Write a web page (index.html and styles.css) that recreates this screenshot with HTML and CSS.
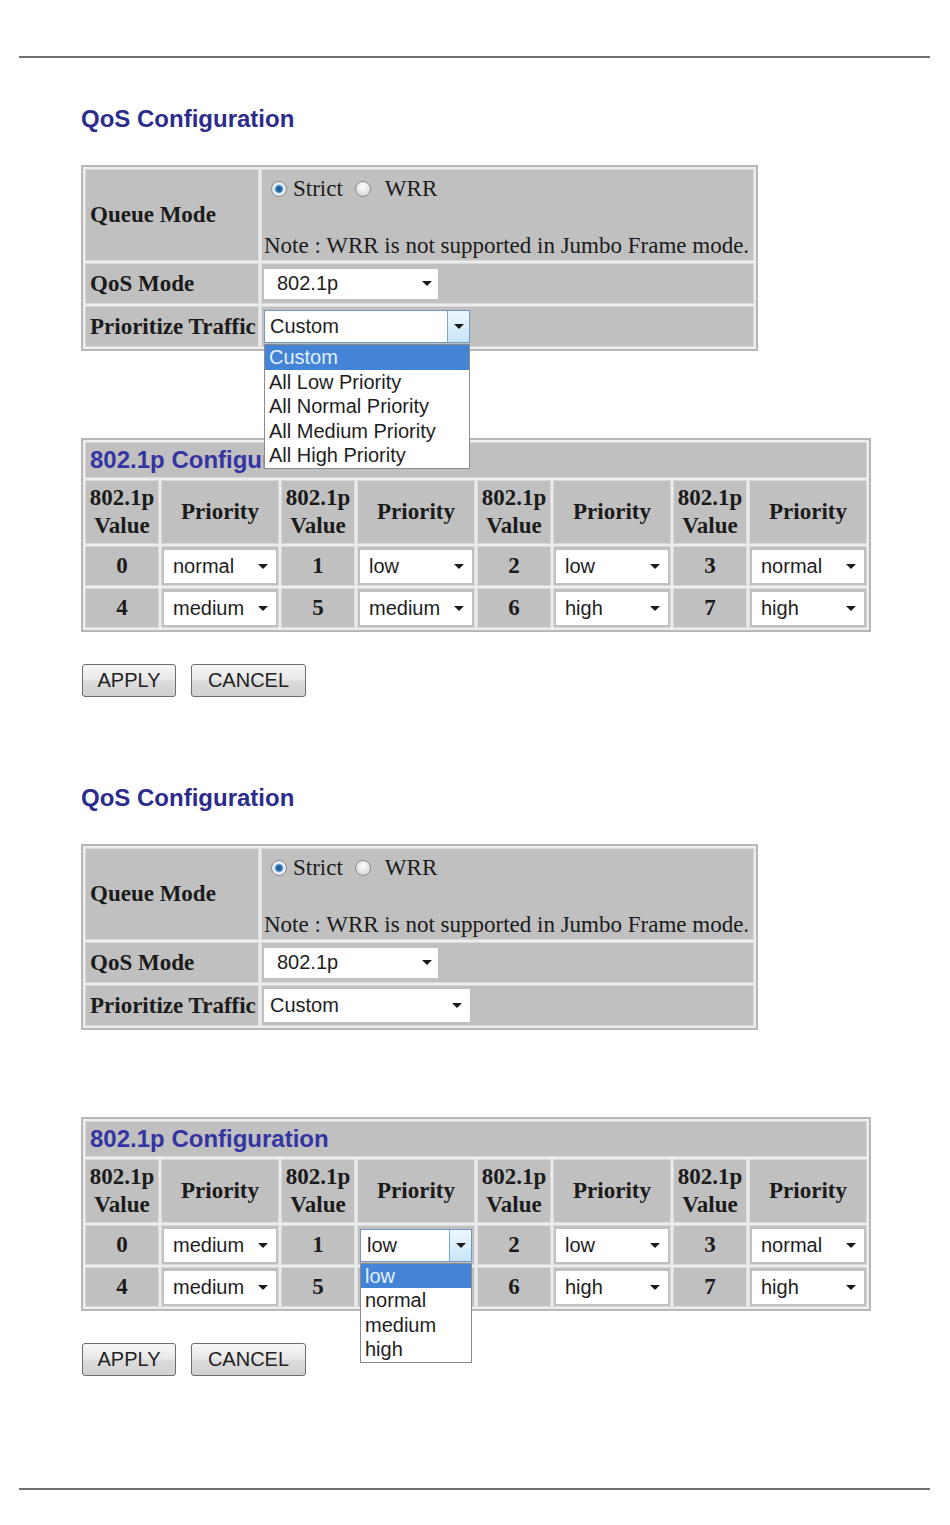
FILE: index.html
```html
<!DOCTYPE html>
<html lang="en">
<head>
    <meta charset="UTF-8">
    <meta name="viewport" content="width=device-width, initial-scale=1.0">
    <title>QoS Configuration</title>
    <link rel="stylesheet" href="styles.css">
</head>
<body>

    <hr class="rule">

    <div class="page">

        <!-- Prioritize Traffic list open -->
        <section class="section">
            <h1 class="title">QoS Configuration</h1>

            <table class="grid mode-table">
                <tr>
                    <td class="label label-mode">Queue Mode</td>
                    <td class="value value-mode">
                        <div class="radio-line">
                            <span class="radio on"></span><span class="radio-label">Strict</span>
                            <span class="radio"></span><span class="radio-label radio-label-wide">WRR</span>
                        </div>
                        <div class="note">Note : WRR is not supported in Jumbo Frame mode.</div>
                    </td>
                </tr>
                <tr>
                    <td class="label">QoS Mode</td>
                    <td class="value">
                        <div class="select qos-select"><span>802.1p</span><span class="caret"></span></div>
                    </td>
                </tr>
                <tr>
                    <td class="label">Prioritize Traffic</td>
                    <td class="value">
                        <div class="select traffic-select open">
                            <span>Custom</span>
                            <span class="select-btn"><span class="caret"></span></span>
                            <ul class="options">
                                <li class="picked">Custom</li>
                                <li>All Low Priority</li>
                                <li>All Normal Priority</li>
                                <li>All Medium Priority</li>
                                <li>All High Priority</li>
                            </ul>
                        </div>
                    </td>
                </tr>
            </table>

            <table class="grid prio-table">
                <tr>
                    <td class="grid-head" colspan="8">802.1p Configuration</td>
                </tr>
                <tr class="col-heads">
                    <td class="num-col">802.1p<br>Value</td><td class="prio-col">Priority</td>
                    <td class="num-col">802.1p<br>Value</td><td class="prio-col">Priority</td>
                    <td class="num-col">802.1p<br>Value</td><td class="prio-col">Priority</td>
                    <td class="num-col">802.1p<br>Value</td><td class="prio-col">Priority</td>
                </tr>
                <tr class="data-row">
                    <td class="num">0</td><td class="sel"><div class="select prio-select"><span>normal</span><span class="caret"></span></div></td>
                    <td class="num">1</td><td class="sel"><div class="select prio-select"><span>low</span><span class="caret"></span></div></td>
                    <td class="num">2</td><td class="sel"><div class="select prio-select"><span>low</span><span class="caret"></span></div></td>
                    <td class="num">3</td><td class="sel"><div class="select prio-select"><span>normal</span><span class="caret"></span></div></td>
                </tr>
                <tr class="data-row">
                    <td class="num">4</td><td class="sel"><div class="select prio-select"><span>medium</span><span class="caret"></span></div></td>
                    <td class="num">5</td><td class="sel"><div class="select prio-select"><span>medium</span><span class="caret"></span></div></td>
                    <td class="num">6</td><td class="sel"><div class="select prio-select"><span>high</span><span class="caret"></span></div></td>
                    <td class="num">7</td><td class="sel"><div class="select prio-select"><span>high</span><span class="caret"></span></div></td>
                </tr>
            </table>

            <div class="actions">
                <button class="btn btn-apply">APPLY</button>
                <button class="btn btn-cancel">CANCEL</button>
            </div>
        </section>

        <!-- priority list open on value 1 -->
        <section class="section">
            <h1 class="title">QoS Configuration</h1>

            <table class="grid mode-table">
                <tr>
                    <td class="label label-mode">Queue Mode</td>
                    <td class="value value-mode">
                        <div class="radio-line">
                            <span class="radio on"></span><span class="radio-label">Strict</span>
                            <span class="radio"></span><span class="radio-label radio-label-wide">WRR</span>
                        </div>
                        <div class="note">Note : WRR is not supported in Jumbo Frame mode.</div>
                    </td>
                </tr>
                <tr>
                    <td class="label">QoS Mode</td>
                    <td class="value">
                        <div class="select qos-select"><span>802.1p</span><span class="caret"></span></div>
                    </td>
                </tr>
                <tr>
                    <td class="label">Prioritize Traffic</td>
                    <td class="value">
                        <div class="select traffic-select"><span>Custom</span><span class="caret"></span></div>
                    </td>
                </tr>
            </table>

            <table class="grid prio-table">
                <tr>
                    <td class="grid-head" colspan="8">802.1p Configuration</td>
                </tr>
                <tr class="col-heads">
                    <td class="num-col">802.1p<br>Value</td><td class="prio-col">Priority</td>
                    <td class="num-col">802.1p<br>Value</td><td class="prio-col">Priority</td>
                    <td class="num-col">802.1p<br>Value</td><td class="prio-col">Priority</td>
                    <td class="num-col">802.1p<br>Value</td><td class="prio-col">Priority</td>
                </tr>
                <tr class="data-row">
                    <td class="num">0</td><td class="sel"><div class="select prio-select"><span>medium</span><span class="caret"></span></div></td>
                    <td class="num">1</td>
                    <td class="sel">
                        <div class="select prio-select open">
                            <span>low</span>
                            <span class="select-btn"><span class="caret"></span></span>
                            <ul class="options">
                                <li class="picked">low</li>
                                <li>normal</li>
                                <li>medium</li>
                                <li>high</li>
                            </ul>
                        </div>
                    </td>
                    <td class="num">2</td><td class="sel"><div class="select prio-select"><span>low</span><span class="caret"></span></div></td>
                    <td class="num">3</td><td class="sel"><div class="select prio-select"><span>normal</span><span class="caret"></span></div></td>
                </tr>
                <tr class="data-row">
                    <td class="num">4</td><td class="sel"><div class="select prio-select"><span>medium</span><span class="caret"></span></div></td>
                    <td class="num">5</td><td class="sel"><div class="select prio-select"><span>medium</span><span class="caret"></span></div></td>
                    <td class="num">6</td><td class="sel"><div class="select prio-select"><span>high</span><span class="caret"></span></div></td>
                    <td class="num">7</td><td class="sel"><div class="select prio-select"><span>high</span><span class="caret"></span></div></td>
                </tr>
            </table>

            <div class="actions">
                <button class="btn btn-apply">APPLY</button>
                <button class="btn btn-cancel">CANCEL</button>
            </div>
        </section>

    </div>

    <hr class="rule rule-bottom">

</body>
</html>
```

FILE: styles.css
```css
body {
    margin: 0;
    background-color: #fff;
    font-family: "Liberation Serif", "Times New Roman", serif;
    color: #1b1b1b;
}
.rule {
    height: 2px;
    border: 0;
    background-color: #6f6f6f;
    margin: 56px 20px 0 19px;
}
.rule-bottom {
    margin-top: 112px;
}
.page {
    padding-left: 81px;
}
.section {
    margin-top: 87px;
}
.section:first-child {
    margin-top: 47px;
}
.title {
    margin: 0 0 32px;
    font: bold 24px/28px "Liberation Sans", Arial, sans-serif;
    color: #2c2c8c;
}

/* gray web-admin tables */
.grid {
    border-collapse: separate;
    border-spacing: 2px;
    border: 2px solid #b7b7b7;
    background-color: #ededed;
}
.grid td {
    box-sizing: border-box;
    background-color: #c0c0c0;
    border: 1px solid #d9d9d9;
    padding: 0;
}
.mode-table {
    margin-bottom: 87px;
}
.mode-table td {
    height: 41px;
}
.mode-table .label {
    width: 174px;
    padding-left: 4px;
    font-size: 23px;
    font-weight: bold;
    white-space: nowrap;
}
.mode-table .value {
    width: 493px;
    padding: 0 2px;
}
.mode-table .label-mode,
.mode-table .value-mode {
    height: 92px;
}
.value-mode {
    vertical-align: top;
}

/* radios */
.radio-line {
    display: flex;
    align-items: center;
    height: 30px;
    margin-top: 4px;
    font-size: 23px;
}
.radio {
    box-sizing: border-box;
    width: 16px;
    height: 16px;
    margin-left: 7px;
    border-radius: 50%;
    border: 1px solid #8d8d8d;
    background: radial-gradient(circle at 50% 35%, #ffffff, #dcdcdc 70%, #c9c9c9);
}
.radio.on {
    background: radial-gradient(circle, #1d4f7e 0, #2f74b3 3px, #8fc0e6 4px, #eef6fc 5px, #dcdcdc 8px);
}
.radio-label {
    margin-left: 6px;
}
.radio-label + .radio {
    margin-left: 12px;
}
.radio-label-wide {
    margin-left: 14px;
}
.note {
    margin-top: 28px;
    font-size: 23px;
    line-height: 28px;
    white-space: nowrap;
}

/* drop-down boxes */
.select {
    position: relative;
    display: flex;
    align-items: center;
    box-sizing: border-box;
    background-color: #fff;
    font: 20px "Liberation Sans", Arial, sans-serif;
    color: #1e1e1e;
}
.caret {
    margin-left: auto;
    width: 0;
    height: 0;
    border-left: 5px solid transparent;
    border-right: 5px solid transparent;
    border-top: 5px solid #1a1a1a;
}
.select-btn {
    margin-left: auto;
    width: 22px;
    height: 100%;
    box-sizing: border-box;
    border-left: 1px solid #79a8d6;
    background: linear-gradient(#eef7fd, #c6e5f8);
    display: flex;
    align-items: center;
    justify-content: center;
}
.select-btn .caret {
    margin: 0;
}
.select.open {
    border: 1px solid #6f98c6;
    padding-right: 0;
}
.options {
    position: absolute;
    top: 100%;
    left: -1px;
    right: -1px;
    z-index: 5;
    margin: 2px 0 0;
    padding: 0;
    list-style: none;
    background-color: #fff;
    border: 1px solid #8c8c8c;
    line-height: 24.5px;
}
.options li {
    padding-left: 4px;
    white-space: nowrap;
}
.options li.picked {
    background-color: #4484d7;
    color: #e3f0ff;
}
.qos-select {
    width: 174px;
    height: 30px;
    padding: 0 6px 0 13px;
}
.traffic-select {
    width: 206px;
    height: 33px;
    padding: 0 8px 0 6px;
}
.traffic-select.open {
    padding-left: 5px;
}

/* 802.1p table */
.grid-head {
    height: 36px;
    padding-left: 4px !important;
    font: bold 24px/28px "Liberation Sans", Arial, sans-serif;
    color: #3434a2;
}
.col-heads td {
    height: 64px;
    text-align: center;
    font-size: 23px;
    font-weight: bold;
    line-height: 28px;
}
.num-col {
    width: 74px;
}
.prio-col {
    width: 118px;
}
.data-row td {
    height: 40px;
}
.data-row .num {
    text-align: center;
    font-size: 23px;
    font-weight: bold;
}
.data-row .sel {
    padding: 0 2px;
}
.prio-select {
    width: 100%;
    height: 33px;
    padding: 0 8px 0 9px;
}
.prio-select.open {
    padding-left: 6px;
}

/* buttons */
.actions {
    display: flex;
    gap: 15px;
    margin-top: 32px;
    padding-left: 1px;
}
.btn {
    height: 33px;
    padding: 0;
    font: 20px "Liberation Sans", Arial, sans-serif;
    color: #222;
    border: 1px solid #6d6d6d;
    border-radius: 3px;
    background: linear-gradient(#f6f6f6, #e9e9e9 48%, #dcdcdc 52%, #d0d0d0);
}
.btn-apply {
    width: 94px;
}
.btn-cancel {
    width: 115px;
}
```
